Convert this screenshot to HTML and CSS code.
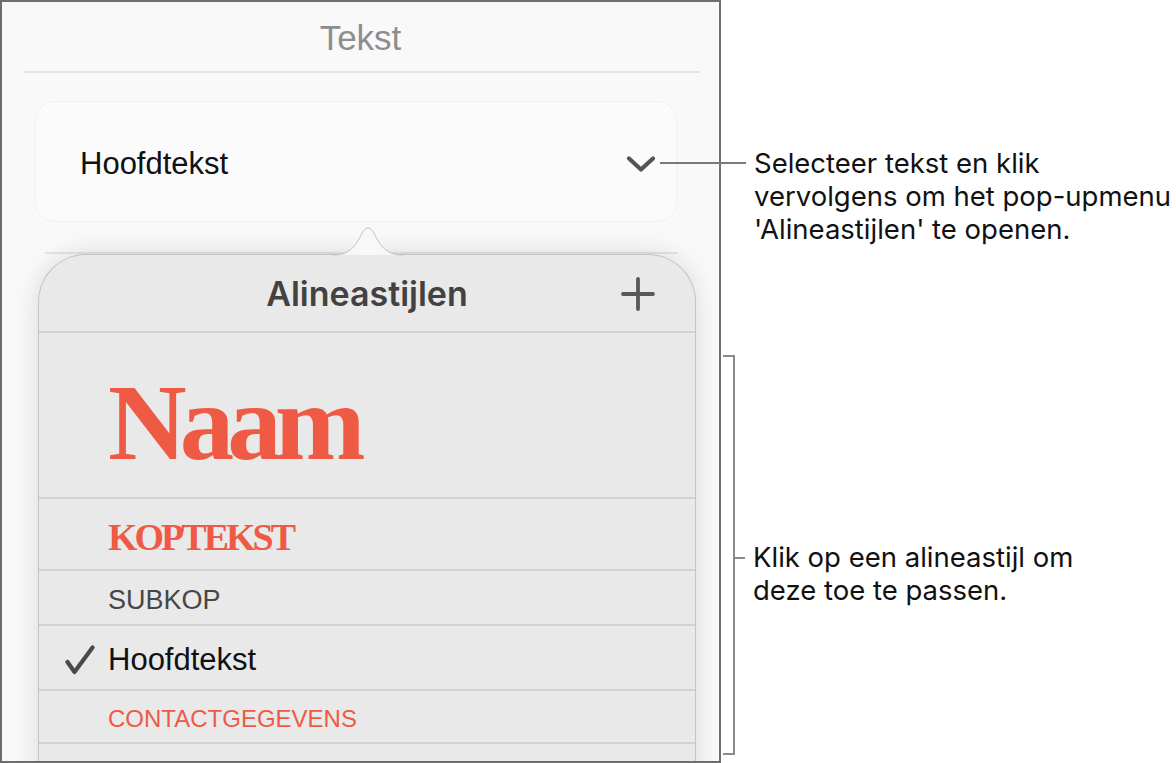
FILE: index.html
```html
<!DOCTYPE html>
<html lang="nl">
<head>
    <meta charset="UTF-8">
    <meta name="viewport" content="width=device-width, initial-scale=1.0">
    <title>Alineastijlen</title>
    <link rel="stylesheet" href="styles.css">
</head>
<body>
    <!-- Format panel -->
    <div class="panel">
        <div class="panel-title">Tekst</div>
        <div class="rule rule-top"></div>

        <!-- Style picker -->
        <div class="picker">
            <span class="picker-label">Hoofdtekst</span>
            <svg class="chevron" width="30" height="18" viewBox="0 0 30 18">
                <polyline points="3,3.5 15,14.5 27,3.5" fill="none" stroke="#545454" stroke-width="4.2" stroke-linecap="round" stroke-linejoin="round"/>
            </svg>
        </div>
        <div class="rule rule-mid"></div>

        <!-- Paragraph styles popover -->
        <div class="popover">
            <svg class="popover-arrow" width="72" height="30" viewBox="0 0 72 30">
                <path d="M0,29 C14,29 20,25 27,13 C31,5 33,2 36,2 C39,2 41,5 45,13 C52,25 58,29 72,29 Z" fill="#f8f8f8"/>
                <path d="M0,29 C14,29 20,25 27,13 C31,5 33,2 36,2 C39,2 41,5 45,13 C52,25 58,29 72,29" fill="none" stroke="#c3c3c3" stroke-width="1"/>
            </svg>
            <div class="popover-head">
                <span></span>
                <span class="popover-title">Alineastijlen</span>
                <svg class="plus" width="34" height="34" viewBox="0 0 34 34">
                    <path d="M17,2 V32 M2,17 H32" stroke="#585858" stroke-width="3.8" stroke-linecap="round"/>
                </svg>
            </div>
            <div class="style-row row-name"><span class="style-name">Naam</span></div>
            <div class="style-row row-heading"><span class="style-heading">KOPTEKST</span></div>
            <div class="style-row row-sub"><span class="style-sub">SUBKOP</span></div>
            <div class="style-row row-body">
                <svg class="check" width="30" height="30" viewBox="0 0 30 30">
                    <path d="M2.5,17 L9.5,27 L27.5,2.5" fill="none" stroke="#4a4a4a" stroke-width="4.2" stroke-linecap="round" stroke-linejoin="round"/>
                </svg>
                <span class="style-body">Hoofdtekst</span>
            </div>
            <div class="style-row row-contact"><span class="style-contact">CONTACTGEGEVENS</span></div>
            <div class="style-row row-more"></div>
        </div>
    </div>

    <!-- Callouts -->
    <div class="notes">
        <div class="note note-picker">
            <div class="leader"></div>
            <p class="note-text">Selecteer tekst en klik<br>vervolgens om het pop-upmenu<br>'Alineastijlen' te openen.</p>
        </div>
        <div class="note note-list">
            <div class="bracket"></div>
            <div class="note-list-body">
                <div class="tick"></div>
                <p class="note-text">Klik op een alineastijl om<br>deze toe te passen.</p>
            </div>
        </div>
    </div>
</body>
</html>
```

FILE: styles.css
```css
/* General */
body {
    margin: 0;
    height: 763px;
    display: flex;
    background: #fff;
    font-family: "Liberation Sans", Arial, sans-serif;
    overflow: hidden;
}

/* Panel */
.panel {
    box-sizing: border-box;
    width: 721px;
    height: 763px;
    flex-shrink: 0;
    border: 2px solid #6e6e6e;
    background: #f9f9f9;
    overflow: hidden;
    display: flex;
    flex-direction: column;
}

.panel > * {
    flex-shrink: 0;
}

.panel-title {
    box-sizing: border-box;
    height: 69px;
    padding-top: 16px;
    line-height: 40px;
    font-size: 35px;
    color: #8d8d8d;
    text-align: center;
}

.rule {
    height: 2px;
    background: #e4e4e4;
}

.rule-top {
    margin: 0 19px 0 22px;
}

.rule-mid {
    margin: 30px 41px 0 43px;
}

/* Picker */
.picker {
    box-sizing: border-box;
    height: 121px;
    margin: 28px 42px 0 33px;
    padding: 4px 20px 0 44px;
    border: 1px solid #f0f0f0;
    border-radius: 20px;
    background: #fbfbfb;
    display: flex;
    align-items: center;
    justify-content: space-between;
}

.picker-label {
    font-size: 31px;
    color: #111;
}

/* Popover */
.popover {
    position: relative;
    width: 656px;
    margin-left: 36px;
    border: 1px solid #c4c4c4;
    border-bottom: none;
    border-radius: 48px 48px 0 0;
    background: #e9e9e9;
    box-shadow: 0 0 26px rgba(0, 0, 0, 0.13);
}

.popover-arrow {
    position: absolute;
    top: -29px;
    left: 293px;
}

.popover-head {
    height: 76px;
    display: grid;
    grid-template-columns: 1fr auto 1fr;
    align-items: center;
}

.popover-title {
    font-family: Inter, "Liberation Sans", sans-serif;
    font-weight: 600;
    font-size: 34px;
    color: #424242;
}

.plus {
    justify-self: end;
    margin: 2px 40px 0 0;
}

.style-row {
    box-sizing: border-box;
    border-top: 2px solid #d2d2d2;
    padding-left: 69px;
    display: flex;
    align-items: center;
    position: relative;
}

.row-name { height: 166px; padding-top: 14px; }
.row-heading { height: 72px; padding-top: 6px; }
.row-sub { height: 55px; padding-top: 6px; }
.row-body { height: 65px; padding-top: 4px; }
.row-contact { height: 53px; padding-top: 4px; }
.row-more { height: 40px; }

.style-name {
    font-family: "Liberation Serif", serif;
    font-weight: bold;
    font-size: 109px;
    line-height: 1;
    letter-spacing: -7px;
    color: #ef5a44;
}

.style-heading {
    font-family: "Liberation Serif", serif;
    font-weight: bold;
    font-size: 38px;
    letter-spacing: -3px;
    color: #ef5a44;
}

.style-sub {
    font-size: 27px;
    color: #464646;
}

.style-body {
    font-size: 31px;
    color: #111;
}

.style-contact {
    font-size: 24px;
    color: #ef5a44;
}

.check {
    position: absolute;
    left: 26px;
    top: 19px;
}

/* Callouts */
.notes {
    flex: 1;
    display: flex;
    flex-direction: column;
    font-family: Inter, "Liberation Sans", sans-serif;
    color: #111;
}

.note {
    display: flex;
    align-items: flex-start;
}

.note-text {
    margin: 0;
    font-size: 27.5px;
    line-height: 33px;
    white-space: nowrap;
}

.note-picker {
    margin: 147px 0 0 -61px;
}

.leader {
    width: 86px;
    height: 2px;
    margin: 15px 8px 0 0;
    background: #7a7a7a;
    flex-shrink: 0;
}

.note-list {
    margin: 109px 0 0 2px;
}

.bracket {
    box-sizing: border-box;
    width: 12px;
    height: 400px;
    border: 2px solid #8a8a8a;
    border-left: none;
    flex-shrink: 0;
}

.note-list-body {
    display: flex;
    align-items: flex-start;
    margin-top: 186px;
}

.tick {
    width: 10px;
    height: 2px;
    margin: 16px 8px 0 0;
    background: #8a8a8a;
    flex-shrink: 0;
}
```
